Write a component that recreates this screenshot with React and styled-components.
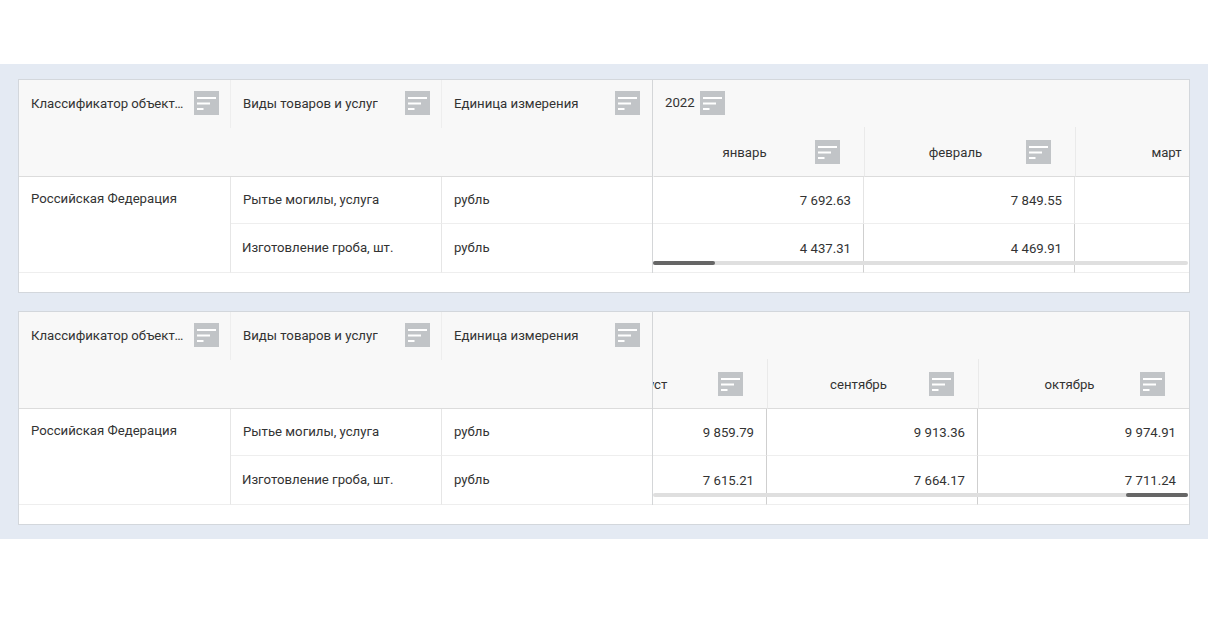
import React from 'react'
import styled, { createGlobalStyle } from 'styled-components'

const GlobalStyle = createGlobalStyle`
  html, body {
    margin: 0;
    background: #fff;
  }
  body {
    font-family: Roboto, "Liberation Sans", sans-serif;
    font-size: 13.2px;
    color: #333;
  }
`

const Page = styled.div`
  padding-top: 64px;
  height: 640px;
  box-sizing: border-box;
`

const Band = styled.div`
  display: flex;
  flex-direction: column;
  gap: 18px;
  padding: 15px 18px 14px;
  background: #e4eaf3;
`

const Panel = styled.div`
  background: #fff;
  border: 1px solid #d3d7dc;
  height: 214px;
  box-sizing: border-box;
`

const TableWrap = styled.div`
  display: flex;
  height: 193px;
`

const Frozen = styled.div`
  flex: 0 0 634px;
  min-width: 0;
  border-right: 1px solid #d4d6d8;
  box-sizing: border-box;
`

const FrozenHead = styled.div`
  height: 97px;
  box-sizing: border-box;
  background: #f8f8f8;
  border-bottom: 1px solid #dcdcdc;
`

const FrozenHeadRow = styled.div`
  display: flex;
  height: 48px;
`

const HeadCell = styled.div`
  flex: 0 0 ${p => p.$w}px;
  min-width: 0;
  box-sizing: border-box;
  display: flex;
  align-items: center;
  justify-content: space-between;
  padding: 0 ${p => (p.$last ? 12 : 11)}px 2px 12px;
  border-right: ${p => (p.$last ? '0' : '1px solid #eee')};
`

const HeadLabel = styled.span`
  white-space: nowrap;
  overflow: hidden;
  text-overflow: ellipsis;
  min-width: 0;
  margin-right: 8px;
`

const FrozenBody = styled.div`
  display: grid;
  grid-template-columns: 212px 211px 210px;
  grid-template-rows: 47px 49px;
`

const RegionCell = styled.div`
  grid-row: 1 / span 2;
  padding: 13px 12px 0;
  line-height: 17px;
  border-bottom: 1px solid #eee;
  border-right: 1px solid #e6e6e6;
`

const BodyCell = styled.div`
  display: flex;
  align-items: center;
  box-sizing: border-box;
  padding: 0 0 2px ${p => p.$pad}px;
  border-bottom: 1px solid #eee;
  border-right: ${p => (p.$last ? '0' : '1px solid #e6e6e6')};
`

const Pane = styled.div`
  position: relative;
  flex: 1;
  min-width: 0;
  overflow: hidden;
`

const GroupRow = styled.div`
  height: 48px;
  box-sizing: border-box;
  display: flex;
  align-items: center;
  gap: 5px;
  padding: 0 0 2px 12px;
  background: #f8f8f8;
  border-bottom: 1px solid #eee;
`

const Columns = styled.div`
  display: flex;
  justify-content: ${p => (p.$end ? 'flex-end' : 'flex-start')};
`

const MonthHead = styled.div`
  flex: 0 0 211px;
  height: 50px;
  box-sizing: border-box;
  display: flex;
  align-items: center;
  gap: 8px;
  padding: 0 24px 0 28px;
  margin-top: -1px;
  background: #f8f8f8;
  border-left: 1px solid #eaeaea;
  border-bottom: 1px solid #dcdcdc;
  &:first-child {
    border-left-color: ${p => (p.$end ? '#eaeaea' : 'transparent')};
  }
`

const MonthLabel = styled.span`
  flex: 1;
  padding-top: 2px;
  text-align: center;
  white-space: nowrap;
`

const ValueCell = styled.div`
  flex: 0 0 211px;
  height: ${p => p.$h}px;
  box-sizing: border-box;
  display: flex;
  align-items: center;
  justify-content: flex-end;
  padding-right: 12px;
  border-bottom: 1px solid #eee;
  border-right: 1px solid ${p => (p.$strong ? '#cfcfcf' : '#e4e4e4')};
  &:last-child {
    border-right-color: transparent;
  }
`

const ScrollTrack = styled.div`
  position: absolute;
  left: 0;
  right: 1px;
  bottom: 8px;
  height: 4px;
  display: flex;
  justify-content: ${p => (p.$end ? 'flex-end' : 'flex-start')};
  background: #dfdfdf;
  border-radius: 2px;
`

const ScrollThumb = styled.div`
  width: 62px;
  background: #666;
  border-radius: 2px;
`

const SortIcon = () => (
  <svg width="25" height="24" viewBox="0 0 25 24" style={{ flex: 'none' }}>
    <rect width="25" height="24" fill="#c1c4c7" />
    <rect x="3" y="6" width="19" height="2" fill="#fff" />
    <rect x="3" y="11.5" width="13" height="2" fill="#fff" />
    <rect x="3" y="17" width="6.5" height="2" fill="#fff" />
  </svg>
)

const columns = [
  { w: 212, label: 'Классификатор объектов' },
  { w: 211, label: 'Виды товаров и услуг' },
  { w: 210, label: 'Единица измерения', last: true },
]

const goods = [
  { name: 'Рытье могилы, услуга', pad: 12 },
  { name: 'Изготовление гроба, шт.', pad: 11 },
]

const tables = [
  {
    year: '2022',
    months: [
      { name: 'январь', values: ['7 692.63', '4 437.31'] },
      { name: 'февраль', values: ['7 849.55', '4 469.91'] },
      { name: 'март', values: ['', ''] },
    ],
  },
  {
    end: true,
    months: [
      { name: 'август', values: ['9 859.79', '7 615.21'] },
      { name: 'сентябрь', values: ['9 913.36', '7 664.17'] },
      { name: 'октябрь', values: ['9 974.91', '7 711.24'] },
    ],
  },
]

function DataTable({ year, months, end }) {
  return (
    <Panel>
      <TableWrap>
        <Frozen>
          <FrozenHead>
            <FrozenHeadRow>
              {columns.map(c => (
                <HeadCell key={c.label} $w={c.w} $last={c.last}>
                  <HeadLabel>{c.label}</HeadLabel>
                  <SortIcon />
                </HeadCell>
              ))}
            </FrozenHeadRow>
          </FrozenHead>
          <FrozenBody>
            <RegionCell>Российская Федерация</RegionCell>
            {goods.map(g => (
              <React.Fragment key={g.name}>
                <BodyCell $pad={g.pad}>{g.name}</BodyCell>
                <BodyCell $pad={12} $last>рубль</BodyCell>
              </React.Fragment>
            ))}
          </FrozenBody>
        </Frozen>
        <Pane>
          <GroupRow>
            {year && <span>{year}</span>}
            {year && <SortIcon />}
          </GroupRow>
          <Columns $end={end}>
            {months.map(m => (
              <MonthHead key={m.name} $end={end}>
                <MonthLabel>{m.name}</MonthLabel>
                <SortIcon />
              </MonthHead>
            ))}
          </Columns>
          {[0, 1].map(row => (
            <Columns key={row} $end={end}>
              {months.map(m => (
                <ValueCell key={m.name} $h={row === 0 ? 47 : 49} $strong={row === 1 || end}>
                  {m.values[row]}
                </ValueCell>
              ))}
            </Columns>
          ))}
          <ScrollTrack $end={end}>
            <ScrollThumb />
          </ScrollTrack>
        </Pane>
      </TableWrap>
    </Panel>
  )
}

export default function App() {
  return (
    <Page>
      <GlobalStyle />
      <Band>
        {tables.map((t, i) => (
          <DataTable key={i} {...t} />
        ))}
      </Band>
    </Page>
  )
}
